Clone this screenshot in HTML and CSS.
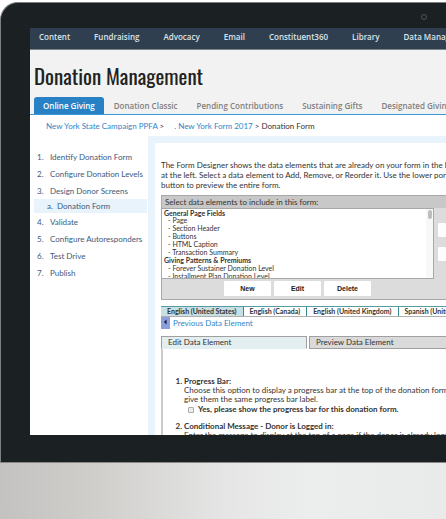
FILE: index.html
```
<!DOCTYPE html>
<html lang="en">
<head>
    <meta charset="UTF-8">
    <meta name="viewport" content="width=device-width, initial-scale=1.0">
    <title>Donation Management</title>
    <link rel="stylesheet" href="styles.css">
</head>
<body>
    <div class="monitor">
        <span class="camera"></span>
        <div class="screen">
            <nav class="main-nav">
                <a href="#">Content</a>
                <a href="#">Fundraising</a>
                <a href="#">Advocacy</a>
                <a href="#">Email</a>
                <a href="#">Constituent360</a>
                <a href="#">Library</a>
                <a href="#">Data Management</a>
            </nav>
            <header class="page-header">
                <h1>Donation Management</h1>
                <nav class="tabs">
                    <a href="#" class="active">Online Giving</a>
                    <a href="#">Donation Classic</a>
                    <a href="#">Pending Contributions</a>
                    <a href="#">Sustaining Gifts</a>
                    <a href="#">Designated Giving</a>
                </nav>
            </header>
            <div class="breadcrumb">
                <span><a href="#">New York State Campaign PPFA</a> &gt;</span>
                <span><a href="#">. New York Form 2017</a> &gt; Donation Form</span>
            </div>
            <div class="columns">
                <!-- Form steps -->
                <aside class="sidebar">
                    <a href="#" class="step"><span>1.</span>Identify Donation Form</a>
                    <a href="#" class="step"><span>2.</span>Configure Donation Levels</a>
                    <a href="#" class="step"><span>3.</span>Design Donor Screens</a>
                    <a href="#" class="step sub-step"><span>a.</span>Donation Form</a>
                    <a href="#" class="step"><span>4.</span>Validate</a>
                    <a href="#" class="step"><span>5.</span>Configure Autoresponders</a>
                    <a href="#" class="step"><span>6.</span>Test Drive</a>
                    <a href="#" class="step"><span>7.</span>Publish</a>
                </aside>
                <main class="designer">
                    <p class="intro">The Form Designer shows the data elements that are already on your form in the box<br>at the left. Select a data element to Add, Remove, or Reorder it. Use the lower portion<br>button to preview the entire form.</p>
                    <div class="picker">
                        <label class="picker-title" for="elements">Select data elements to include in this form:</label>
                        <div class="picker-body">
                            <div class="list-box">
                                <select id="elements" class="elements" size="9">
                                    <optgroup label="General Page Fields">
                                        <option>- Page</option>
                                        <option>- Section Header</option>
                                        <option>- Buttons</option>
                                        <option>- HTML Caption</option>
                                        <option>- Transaction Summary</option>
                                    </optgroup>
                                    <optgroup label="Giving Patterns &amp; Premiums">
                                        <option>- Forever Sustainer Donation Level</option>
                                        <option>- Installment Plan Donation Level</option>
                                        <option>- Donation Level</option>
                                        <option>- Premium</option>
                                    </optgroup>
                                </select>
                                <span class="scroll-track"><span class="scroll-thumb"></span></span>
                            </div>
                            <div class="order-buttons">
                                <button type="button" aria-label="Move up"></button>
                                <button type="button" aria-label="Move down"></button>
                            </div>
                        </div>
                        <div class="picker-actions">
                            <button type="button">New</button>
                            <button type="button">Edit</button>
                            <button type="button">Delete</button>
                        </div>
                    </div>
                    <nav class="languages">
                        <a href="#" class="active">English (United States)</a>
                        <a href="#">English (Canada)</a>
                        <a href="#">English (United Kingdom)</a>
                        <a href="#">Spanish (United States)</a>
                    </nav>
                    <a href="#" class="previous">
                        <svg width="9" height="12" viewBox="0 0 9 12"><rect width="9" height="12" fill="#8c9fdb"/><path d="M5.5 2.5v5L3 5z" fill="#10173a"/></svg>
                        Previous Data Element
                    </a>
                    <div class="element-tabs">
                        <a href="#" class="active">Edit Data Element</a>
                        <a href="#">Preview Data Element</a>
                    </div>
                    <ol class="settings">
                        <li>
                            <strong>Progress Bar:</strong>
                            <p>Choose this option to display a progress bar at the top of the donation form. You can<br>give them the same progress bar label.</p>
                            <label class="check"><input type="checkbox">Yes, please show the progress bar for this donation form.</label>
                        </li>
                        <li>
                            <strong>Conditional Message - Donor is Logged in:</strong>
                            <p>Enter the message to display at the top of a page if the donor is already logged in.</p>
                        </li>
                    </ol>
                </main>
            </div>
        </div>
    </div>
    <div class="chin"></div>
</body>
</html>
```
FILE: styles.css
```
* {
    box-sizing: border-box;
}
body {
    display: flex;
    flex-direction: column;
    height: 100vh;
    margin: 0;
    padding-top: 2px;
    overflow: hidden;
    background: #fff;
    color: #333;
    font-family: Lato, "Open Sans", sans-serif;
    font-size: 8px;
    line-height: 10px;
}
a {
    color: #2f86c8;
    text-decoration: none;
    white-space: nowrap;
}
p {
    margin: 0;
    white-space: nowrap;
}
button {
    border: none;
    border-radius: 1px;
    padding: 0;
    background: #fff;
    color: #222;
    font: bold 7px "Liberation Sans", Arial, sans-serif;
}
.monitor {
    position: relative;
    flex: 1;
    min-height: 0;
    padding: 25px 0 27px 29px;
    border: 1px solid #7d8082;
    border-right: none;
    border-bottom-color: #888;
    border-radius: 18px 0 0 0;
    background: #1b2023;
}
.camera {
    position: absolute;
    top: 11px;
    right: 19px;
    width: 6px;
    height: 6px;
    border: 1px solid #555;
    border-radius: 50%;
}
.screen {
    display: flex;
    flex-direction: column;
    height: 100%;
    overflow: hidden;
    background: #fff;
}
.chin {
    height: 56px;
    background: linear-gradient(to right, #c3c2c0, #d0cfcc 22%, #e5e5e5 50%, #eceeed 70%, #e9ebea);
}

/* Top navigation */
.main-nav {
    display: flex;
    flex-shrink: 0;
    gap: 24px;
    height: 22px;
    padding: 4px 9px;
    border-bottom: 1px solid #7c858d;
    background: #2f3f4f;
}
.main-nav a {
    color: #dde3e8;
    font-family: "Open Sans", sans-serif;
    font-weight: 600;
}
.page-header {
    flex-shrink: 0;
    padding: 12px 4px 0;
    border-bottom: 1px solid #3a98d4;
    background: #f2f2f2;
}
h1 {
    margin: 0 0 8px;
    color: #222;
    font: 21px/27px "Oswald", "Liberation Sans Narrow", "Roboto Condensed", sans-serif;
    white-space: nowrap;
}
.tabs {
    display: flex;
    gap: 1px;
}
.tabs a {
    padding: 4px 9px 3px;
    border-radius: 3px 3px 0 0;
    color: #808080;
    font-family: "Open Sans", sans-serif;
    font-weight: 600;
}
.tabs .active {
    background: #2781c4;
    color: #fff;
}
.breadcrumb {
    display: flex;
    flex-shrink: 0;
    gap: 10px;
    padding: 6px 16px 5px;
    white-space: nowrap;
}

/* Columns */
.columns {
    display: flex;
    flex: 1;
    min-height: 0;
}
.sidebar {
    flex: 0 0 118px;
    min-width: 0;
    padding: 12px 1px 0 4px;
}
.step {
    display: flex;
    padding: 3px;
    margin-top: 1px;
    color: #3c5a7c;
}
.step span {
    flex: 0 0 13px;
}
.sub-step {
    padding: 2px 13px;
    margin-top: 0;
    background: #e8f3fb;
}
.sub-step span {
    flex-basis: 10px;
}
.designer {
    flex: 1;
    min-width: 0;
    padding: 17px 0 0 6px;
    border-top: 7px solid #e8f3fb;
    border-left: 7px solid #e8f3fb;
}
.intro {
    margin-bottom: 5px;
}

/* Data element picker */
.picker {
    border: 1px solid #a8a8a8;
    border-right: none;
    background: #dcdcdc;
}
.picker-title {
    display: block;
    padding: 1px 3px;
    background: #c8c8c8;
}
.picker-body {
    display: flex;
    gap: 4px;
}
.list-box {
    position: relative;
    flex: 0 0 272px;
}
.elements {
    display: block;
    width: 100%;
    height: 71px;
    padding: 0;
    border: 1px solid #a8a8a8;
    border-left: none;
    border-radius: 0;
    outline: none;
    background: #fff;
    color: #333;
    font: 7px/8px Lato, "Open Sans", sans-serif;
    overflow-y: scroll;
    scrollbar-width: none;
}
.elements optgroup {
    padding: 0;
    font-weight: 700;
}
.elements option {
    height: 8px;
    min-height: 8px;
    padding: 0 0 0 6px;
    font-weight: 400;
}
.elements option:first-child {
    margin-top: -2px;
}
.scroll-track {
    position: absolute;
    top: 1px;
    right: 1px;
    bottom: 1px;
    width: 7px;
    padding: 1px;
    background: #f8f8f8;
    pointer-events: none;
}
.scroll-thumb {
    display: block;
    width: 4px;
    height: 9px;
    margin-left: 1px;
    border-radius: 2px;
    background: #bdbdbd;
}
.order-buttons {
    display: flex;
    flex: 1;
    flex-direction: column;
    gap: 10px;
    padding-top: 15px;
}
.order-buttons button {
    height: 14px;
}
.picker-actions {
    display: flex;
    gap: 3px;
    padding: 2px 62px 3px;
}
.picker-actions button {
    width: 47px;
    height: 15px;
}

/* Language tabs */
.languages {
    display: flex;
    margin-top: 6px;
    border-top: 1px solid #559ca6;
    border-bottom: 1px solid #b0b0b0;
    font-size: 7px;
    font-weight: 700;
    line-height: 9px;
}
.languages a {
    padding: 0 6px;
    border-right: 1px solid #3a8a96;
    color: #333;
}
.languages .active {
    background: #c8dfe3;
}
.previous {
    display: flex;
    gap: 3px;
    align-items: center;
    margin-bottom: 7px;
}

/* Edit / preview */
.element-tabs {
    display: flex;
    gap: 2px;
}
.element-tabs a {
    flex: 1 0 146px;
    padding: 0 6px 1px;
    border: 1px solid #a0a0a0;
    background: #dadada;
    color: #333;
}
.element-tabs .active {
    flex: 0 0 146px;
    border-bottom-color: #e3eef0;
    background: #e3eef0;
}
.settings {
    margin: 0;
    padding: 28px 0 0 21px;
    border-left: 2px solid #ccc;
    line-height: 9px;
}
.settings li {
    margin-bottom: 7px;
}
.settings li::marker {
    font-weight: 700;
}
.settings strong {
    font-weight: 700;
}
.check {
    display: flex;
    gap: 4px;
    align-items: center;
    padding: 1px 4px;
    font-weight: 700;
    white-space: nowrap;
}
.check input {
    width: 6px;
    height: 6px;
    margin: 0;
    border: 1px solid #aaa;
    border-radius: 1px;
    background: #eee;
    appearance: none;
}
```
